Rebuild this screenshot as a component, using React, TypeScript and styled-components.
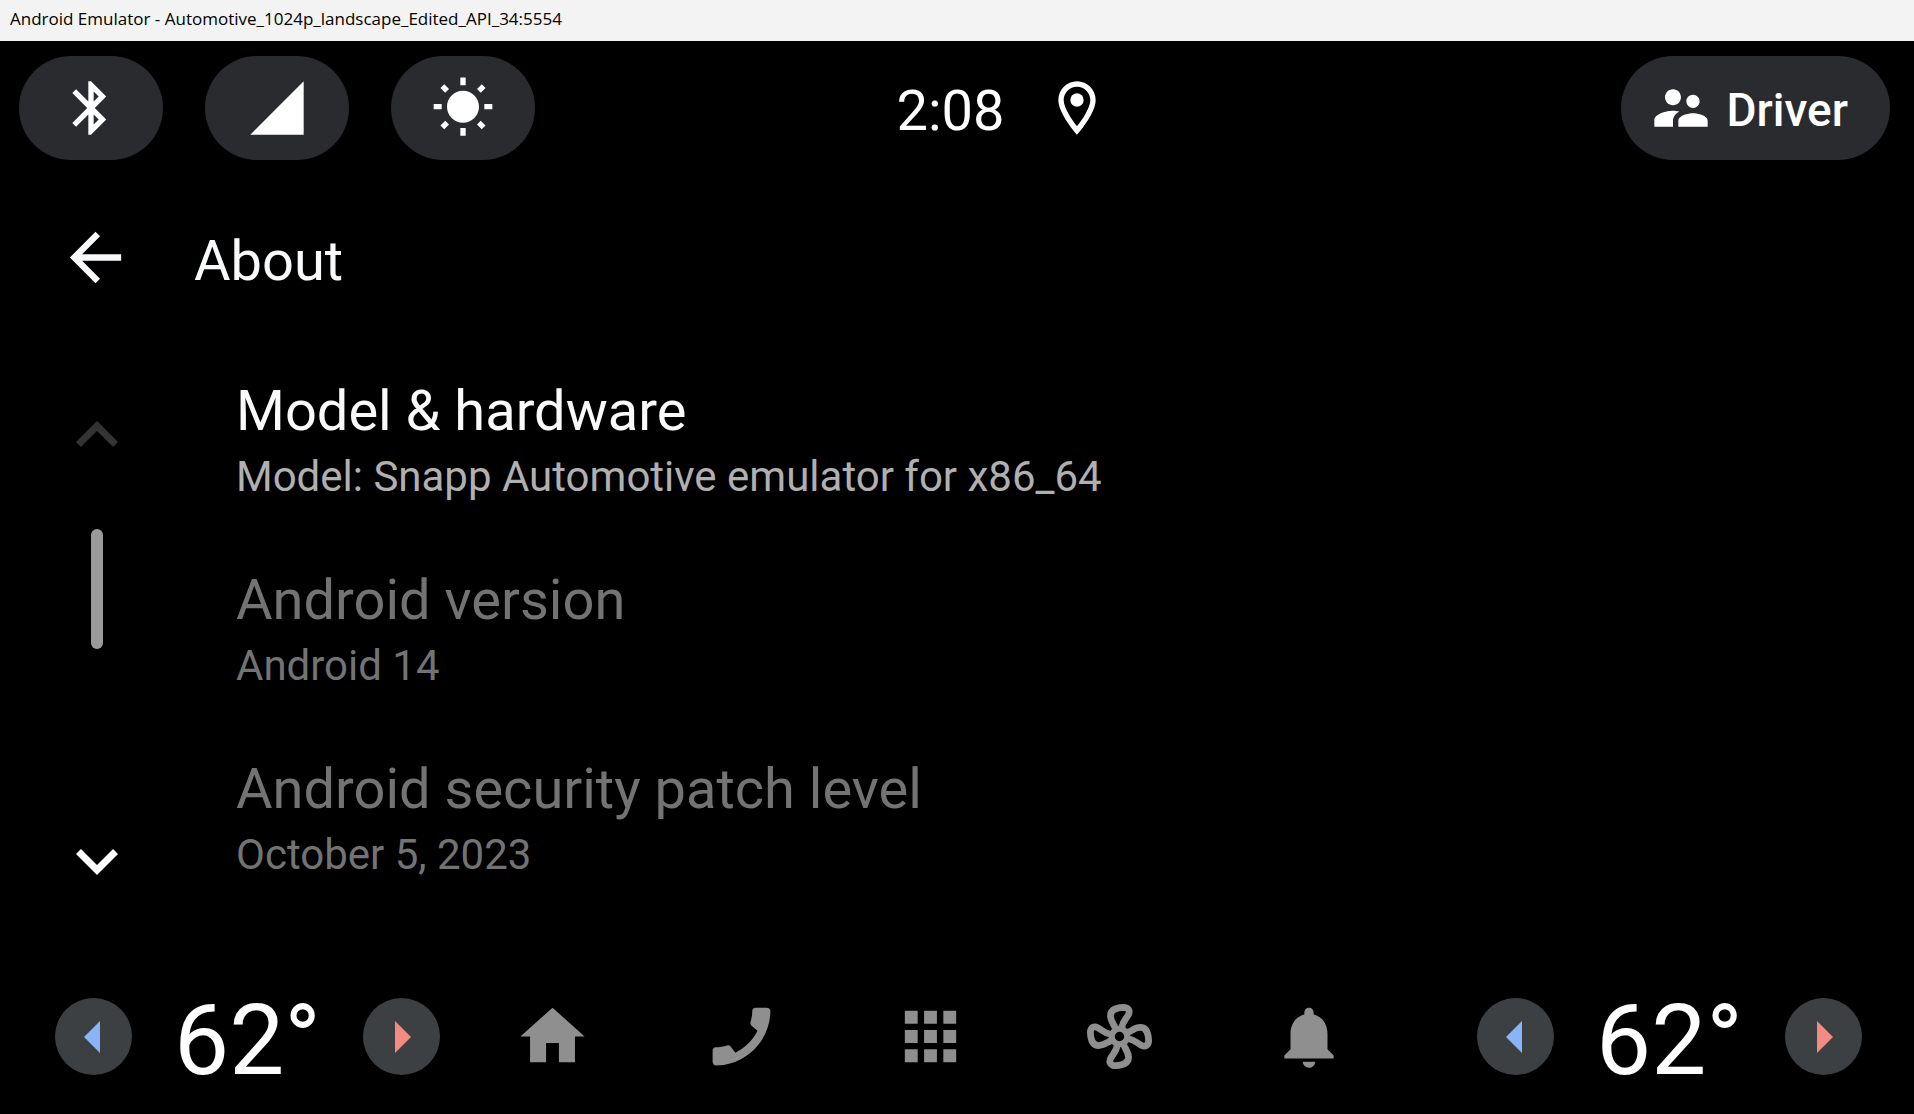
import React from "react";
import styled, { createGlobalStyle, css } from "styled-components";
import {
  MdApps,
  MdArrowBack,
  MdBluetooth,
  MdCall,
  MdExpandLess,
  MdExpandMore,
  MdHome,
  MdNotifications,
  MdSignalCellular4Bar,
  MdSupervisorAccount,
  MdWbSunny,
} from "react-icons/md";

const GlobalStyle = createGlobalStyle`
  *, *::before, *::after { box-sizing: border-box; }
  body {
    margin: 0;
    background: #000;
    color: #fff;
    font-family: Roboto, "Liberation Sans", sans-serif;
  }
  button {
    margin: 0;
    padding: 0;
    border: 0;
    background: none;
    color: inherit;
    font: inherit;
    cursor: pointer;
  }
  svg { display: block; flex: none; }
`;

const Window = styled.div`
  display: flex;
  flex-direction: column;
  min-height: 100vh;
`;

const TitleBar = styled.div`
  display: flex;
  align-items: center;
  height: 41px;
  padding: 0 10px 4px;
  background: #f3f3f3;
  color: #000;
  font-family: "Open Sans", "Noto Sans", sans-serif;
  font-size: 17px;
  line-height: 24px;
  white-space: nowrap;
`;

const StatusBar = styled.header`
  display: grid;
  grid-template-columns: 1fr auto 1fr;
  align-items: center;
  padding: 15px 24px 15px 19px;
`;

const QuickControls = styled.div`
  display: flex;
  gap: 42px;
`;

const pill = css`
  display: flex;
  align-items: center;
  justify-content: center;
  height: 104px;
  border-radius: 52px;
  background: #2a2b2f;
`;

const QuickButton = styled.button`
  ${pill}
  width: 144px;
`;

const ProfileButton = styled.button`
  ${pill}
  justify-self: end;
  gap: 14px;
  padding: 0 42px 0 28px;
  font-size: 46px;
  font-weight: 500;
  line-height: 54px;
`;

const ProfileName = styled.span`
  padding-top: 4px;
`;

const ClockGroup = styled.div`
  display: flex;
  align-items: center;
  gap: 41px;
  padding-left: 97px;
`;

const Clock = styled.time`
  padding-top: 6px;
  font-size: 56px;
  line-height: 66px;
`;

const PageHeader = styled.div`
  display: flex;
  align-items: center;
  gap: 60px;
  padding: 44px 57px 50px;
`;

const PageTitle = styled.h1`
  margin: 0;
  padding-top: 6px;
  color: #f8f9fa;
  font-size: 56px;
  font-weight: 400;
  line-height: 66px;
`;

const Content = styled.main`
  display: flex;
  flex: 1;
`;

const ScrollRail = styled.div`
  display: flex;
  flex-direction: column;
  align-items: center;
  width: 236px;
  padding: 47px 97px 56px 55px;
`;

const ScrollButton = styled.button`
  color: #fff;
  &:disabled {
    color: #333;
    cursor: default;
  }
`;

const ScrollTrack = styled.div`
  flex: 1;
  padding-top: 52px;
`;

const ScrollThumb = styled.div`
  width: 12px;
  height: 120px;
  border-radius: 6px;
  background: #9a9a9a;
`;

const SettingList = styled.ul`
  flex: 1;
  margin: 0;
  padding: 0;
  list-style: none;
`;

const SettingItem = styled.li<{ $muted?: boolean }>`
  display: flex;
  flex-direction: column;
  gap: 8px;
  padding: 32px 0 33px;
  color: ${(p) => (p.$muted ? "#737373" : "#fafafa")};
`;

const SettingTitle = styled.span`
  font-size: 56px;
  line-height: 66px;
`;

const SettingSummary = styled.span<{ $muted?: boolean }>`
  color: ${(p) => (p.$muted ? "#737373" : "#b0b0b0")};
  font-size: 42px;
  line-height: 50px;
`;

const BottomBar = styled.footer`
  display: flex;
  align-items: center;
  height: 155px;
  padding: 0 52px 0 55px;
`;

const Climate = styled.div`
  display: flex;
  align-items: center;
  justify-content: space-between;
  width: 385px;
`;

const ClimateButton = styled.button<{ $tint: string }>`
  display: flex;
  align-items: center;
  justify-content: center;
  width: 77px;
  height: 77px;
  border-radius: 50%;
  background: #3c4043;
  color: ${(p) => p.$tint};
`;

const Temperature = styled.output`
  padding-top: 8px;
  font-size: 98px;
  line-height: 116px;
`;

const Dock = styled.nav`
  display: grid;
  flex: 1;
  grid-template-columns: repeat(5, 1fr);
  padding: 0 74px 0 18px;
`;

const DockButton = styled.button`
  display: flex;
  align-items: center;
  justify-content: center;
  height: 77px;
  color: #8f8f8f;
`;

const PhoneIcon = styled(MdCall)`
  transform: scaleX(-1);
`;

const PlaceIcon = () => (
  <svg width="64" height="64" viewBox="0 0 24 24" fill="currentColor" aria-hidden="true">
    <path d="M12 2C8.13 2 5 5.13 5 9c0 5.25 7 13 7 13s7-7.75 7-13c0-3.87-3.13-7-7-7zM7 9c0-2.76 2.24-5 5-5s5 2.24 5 5c0 2.88-2.88 7.19-5 9.88C9.92 16.21 7 11.85 7 9z" />
    <circle cx="12" cy="9" r="2.5" />
  </svg>
);

const FanIcon = () => (
  <svg
    width="65"
    height="65"
    viewBox="-97 -97 194 194"
    fill="none"
    stroke="currentColor"
    strokeWidth="20"
    aria-hidden="true"
  >
    <circle r="23" strokeWidth="18" />
    {[0, 90, 180, 270].map((angle) => (
      <path
        key={angle}
        transform={`rotate(${angle})`}
        d="M-13-26C-18-38-27-48-27-62C-27-80-10-86 12-87C26-87 32-77 27-66C20-52 9-46 6-24"
      />
    ))}
  </svg>
);

const Triangle = ({ left = false }: { left?: boolean }) => (
  <svg width="32" height="32" viewBox="0 0 32 32" fill="currentColor" aria-hidden="true">
    <path d={left ? "M22 0v32L6 16z" : "M10 0v32l16-16z"} />
  </svg>
);

const ClimateControl = ({ side }: { side: string }) => (
  <Climate>
    <ClimateButton $tint="#8ab4f8" aria-label={`${side} cooler`}>
      <Triangle left />
    </ClimateButton>
    <Temperature>62°</Temperature>
    <ClimateButton $tint="#f28b82" aria-label={`${side} warmer`}>
      <Triangle />
    </ClimateButton>
  </Climate>
);

const settings = [
  {
    title: "Model & hardware",
    summary: "Model: Snapp Automotive emulator for x86_64",
    muted: false,
  },
  { title: "Android version", summary: "Android 14", muted: true },
  { title: "Android security patch level", summary: "October 5, 2023", muted: true },
];

const dock = [
  { label: "Home", icon: <MdHome size={77} /> },
  { label: "Phone", icon: <PhoneIcon size={77} /> },
  { label: "Apps", icon: <MdApps size={77} /> },
  { label: "Climate", icon: <FanIcon /> },
  { label: "Notifications", icon: <MdNotifications size={74} /> },
];

export default function App() {
  return (
    <Window>
      <GlobalStyle />
      <TitleBar>Android Emulator - Automotive_1024p_landscape_Edited_API_34:5554</TitleBar>
      <StatusBar>
        <QuickControls>
          <QuickButton aria-label="Bluetooth">
            <MdBluetooth size={64} />
          </QuickButton>
          <QuickButton aria-label="Mobile network">
            <MdSignalCellular4Bar size={64} />
          </QuickButton>
          <QuickButton aria-label="Brightness">
            <MdWbSunny size={64} />
          </QuickButton>
        </QuickControls>
        <ClockGroup>
          <Clock>2:08</Clock>
          <PlaceIcon />
        </ClockGroup>
        <ProfileButton>
          <MdSupervisorAccount size={64} />
          <ProfileName>Driver</ProfileName>
        </ProfileButton>
      </StatusBar>
      <PageHeader>
        <button aria-label="Back">
          <MdArrowBack size={77} color="#f8f9fa" />
        </button>
        <PageTitle>About</PageTitle>
      </PageHeader>
      <Content>
        <ScrollRail>
          <ScrollButton aria-label="Scroll up" disabled>
            <MdExpandLess size={84} />
          </ScrollButton>
          <ScrollTrack>
            <ScrollThumb />
          </ScrollTrack>
          <ScrollButton aria-label="Scroll down">
            <MdExpandMore size={84} />
          </ScrollButton>
        </ScrollRail>
        <SettingList>
          {settings.map((s) => (
            <SettingItem key={s.title} $muted={s.muted}>
              <SettingTitle>{s.title}</SettingTitle>
              <SettingSummary $muted={s.muted}>{s.summary}</SettingSummary>
            </SettingItem>
          ))}
        </SettingList>
      </Content>
      <BottomBar>
        <ClimateControl side="Driver" />
        <Dock aria-label="Dock">
          {dock.map((d) => (
            <DockButton key={d.label} aria-label={d.label}>
              {d.icon}
            </DockButton>
          ))}
        </Dock>
        <ClimateControl side="Passenger" />
      </BottomBar>
    </Window>
  );
}
